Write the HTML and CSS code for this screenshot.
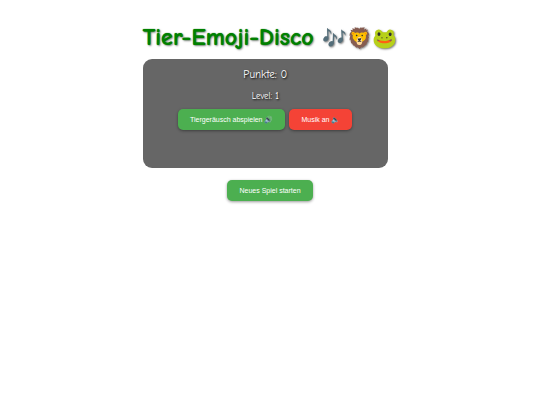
FILE: index.html
```
<!DOCTYPE html>
<html lang="de">
<head>
    <meta charset="UTF-8">
    <title>Tier-Emoji-Disco</title>
    <link rel="stylesheet" href="styles.css">
</head>
<body>
    <div class="game">
        <h1>Tier-Emoji-Disco <span class="emojis">🎶🦁🐸</span></h1>
        <div class="panel">
            <p class="score">Punkte: 0</p>
            <p class="level">Level: 1</p>
            <div class="controls">
                <button type="button">Tiergeräusch abspielen 🔊</button>
                <button type="button" class="music">Musik an 🔈</button>
            </div>
        </div>
        <button type="button">Neues Spiel starten</button>
    </div>
</body>
</html>
```
FILE: styles.css
```
body {
    margin: 0;
    padding: 24px 0;
    background-color: white;
    font-family: "Comic Sans MS", "Comic Neue", cursive;
    text-align: center;
}

.game {
    display: flex;
    flex-direction: column;
    align-items: center;
    width: fit-content;
    margin: 0 auto;
}

h1 {
    margin: 0 0 8px;
    color: green;
    font-size: 24px;
    line-height: 27px;
    white-space: nowrap;
    text-shadow: 0 0 1px green, 1px 1px 2px rgba(0, 0, 0, 0.5);
}

.emojis {
    font-size: 20px;
    line-height: 20px;
    text-shadow: 1px 1px 2px rgba(0, 0, 0, 0.5);
}

.panel {
    align-self: flex-start;
    box-sizing: border-box;
    width: 245px;
    min-height: 109px;
    margin-bottom: 12px;
    padding: 8px;
    background-color: #666;
    border-radius: 9px;
    color: white;
    text-shadow: 1px 1px 2px black;
}

.score {
    margin: 0 0 8px;
    font-size: 11px;
    line-height: 16px;
}

.level {
    margin: 0 0 8px;
    font-size: 9px;
    line-height: 10px;
}

.controls {
    display: flex;
    justify-content: center;
    gap: 4px;
}

button {
    padding: 0 12px;
    border: none;
    border-radius: 5px;
    background-color: #4CAF50;
    color: white;
    font-family: "Liberation Sans", Arial, sans-serif;
    font-size: 7px;
    line-height: 21px;
    box-shadow: 0 1px 3px rgba(0, 0, 0, 0.4);
    cursor: pointer;
}

.music {
    background-color: #f44336;
}
```
